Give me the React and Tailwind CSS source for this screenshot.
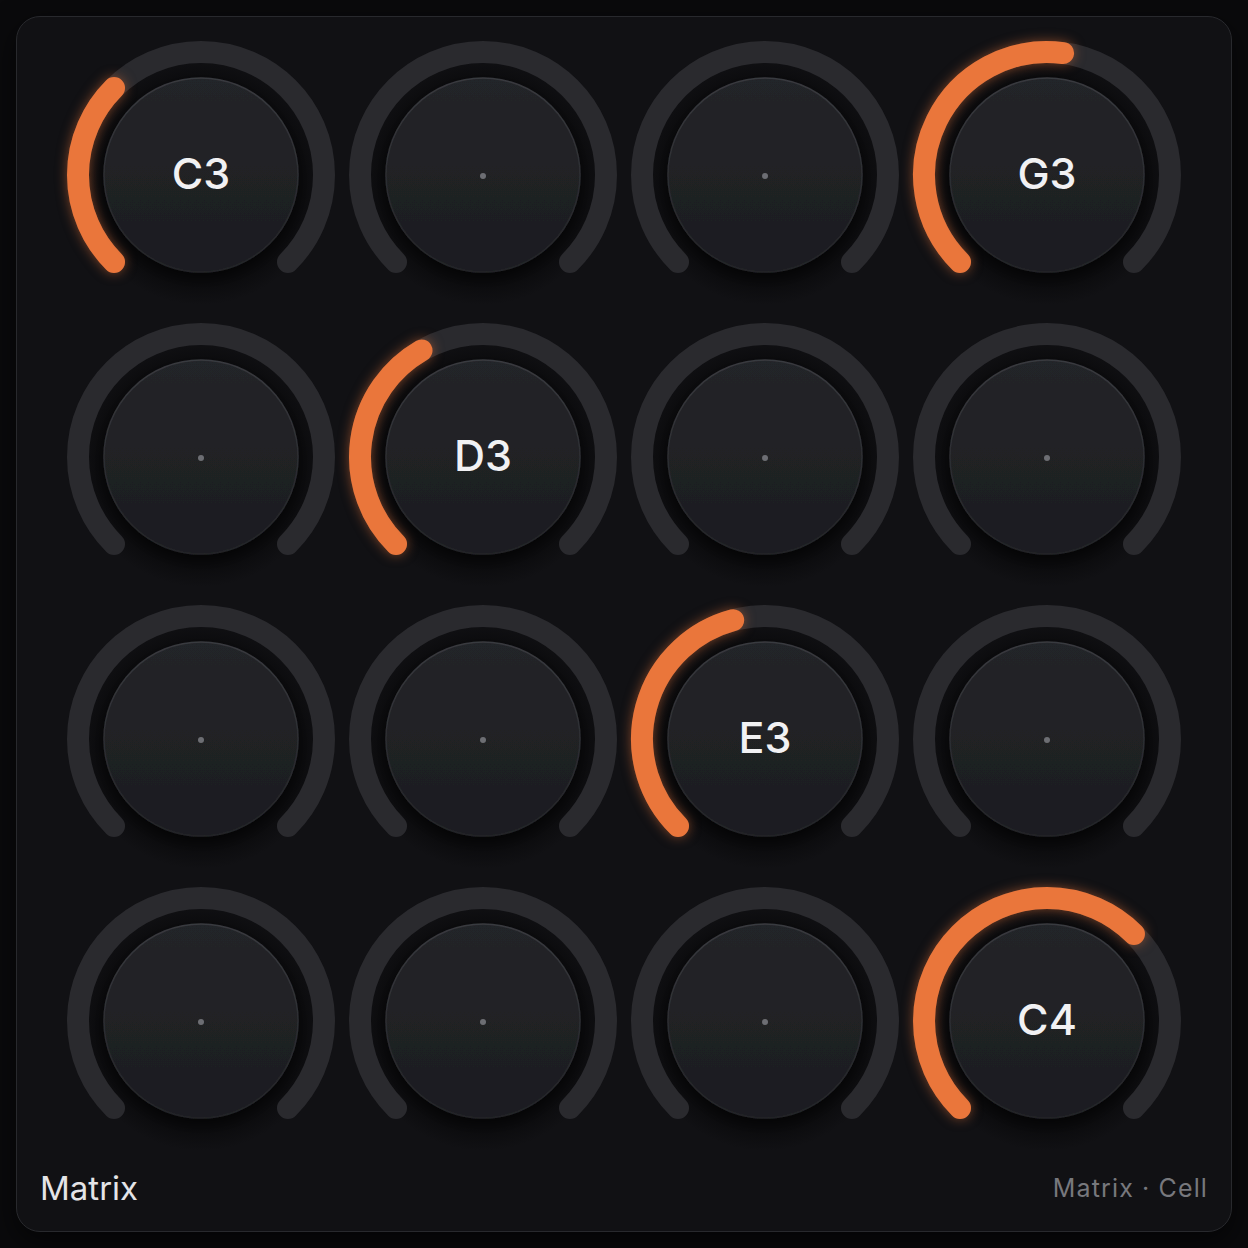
import React from "react";

const CELLS = [
  "C3", null, null, "G3",
  null, "D3", null, null,
  null, null, "E3", null,
  null, null, null, "C4",
];

// range is C2..C5, 36 semitones over a 270 degree sweep
const STEPS = { C: 0, D: 2, E: 4, F: 5, G: 7, A: 9, B: 11 };
const noteValue = (n) => (STEPS[n[0]] + (parseInt(n.slice(1), 10) - 2) * 12) / 36;

const SIZE = 268;
const C = SIZE / 2;

function polar(r, deg) {
  const a = (deg * Math.PI) / 180;
  return [C + r * Math.sin(a), C - r * Math.cos(a)];
}

function arc(r, from, to) {
  const [x1, y1] = polar(r, from);
  const [x2, y2] = polar(r, to);
  const large = to - from > 180 ? 1 : 0;
  return `M ${x1} ${y1} A ${r} ${r} 0 ${large} 1 ${x2} ${y2}`;
}

function Knob({ note, idx }) {
  const end = note ? -135 + noteValue(note) * 270 : -135;
  return (
    <div className="relative w-[268px] h-[268px]">
      <svg width={SIZE} height={SIZE} viewBox={`0 0 ${SIZE} ${SIZE}`} className="overflow-visible">
        <defs>
          <radialGradient id={`well${idx}`} cx="50%" cy="50%" r="50%">
            <stop offset="82%" stopColor="#0b0b0d" />
            <stop offset="100%" stopColor="#0b0b0d" stopOpacity="0" />
          </radialGradient>
          <linearGradient id={`face${idx}`} x1="0" y1="0" x2="0" y2="1">
            <stop offset="0%" stopColor="#242529" />
            <stop offset="100%" stopColor="#1c1d20" />
          </linearGradient>
          <linearGradient id={`rim${idx}`} x1="0" y1="0" x2="0" y2="1">
            <stop offset="0%" stopColor="#393a3f" />
            <stop offset="55%" stopColor="#2c2d31" />
            <stop offset="100%" stopColor="#232428" />
          </linearGradient>
          <filter id={`sh${idx}`} x="-30%" y="-30%" width="160%" height="160%">
            <feDropShadow dx="0" dy="6" stdDeviation="6" floodColor="#000" floodOpacity="0.6" />
          </filter>
        </defs>

        <circle cx={C} cy={C + 6} r={124} fill={`url(#well${idx})`} />
        <path d={arc(123, -135, 135)} fill="none" stroke="#2a2a2e" strokeWidth="22" strokeLinecap="round" />
        {note && (
          <path
            d={arc(123, -135, end)}
            fill="none"
            stroke="#ea763b"
            strokeWidth="22"
            strokeLinecap="round"
            className="drop-shadow-[0_0_6px_rgba(234,118,59,0.5)]"
          />
        )}
        <circle cx={C} cy={C} r={97} fill={`url(#face${idx})`} stroke={`url(#rim${idx})`} strokeWidth="1.5" filter={`url(#sh${idx})`} />
        {!note && <circle cx={C} cy={C + 1} r={3} fill="#6d6e73" />}
      </svg>
      {note && (
        <div className="absolute inset-0 flex items-center justify-center">
          <span className="font-['Inter',sans-serif] text-[43px] font-medium text-[#f1f1f3] leading-none -mt-[3px]">
            {note}
          </span>
        </div>
      )}
    </div>
  );
}

export default function App() {
  return (
    <div className="min-h-screen w-full bg-[#0a0a0c] p-4 font-['Inter',sans-serif]">
      <div className="w-[1216px] h-[1216px] rounded-[24px] border border-[#28292d] bg-[#111114] shadow-[0_10px_30px_rgba(0,0,0,0.6)] flex flex-col pt-[24px] pb-[24px]">
        <div className="grid grid-cols-[repeat(4,268px)] gap-x-[14px] gap-y-[14px] justify-center">
          {CELLS.map((n, i) => (
            <Knob key={i} note={n} idx={i} />
          ))}
        </div>
        <div className="mt-[16px] h-[36px] px-[23px] flex items-center justify-between">
          <span className="text-[33px] text-[#e4e4e7]">Matrix</span>
          <span className="text-[25px] tracking-[0.045em] text-[#77787d]">Matrix · Cell</span>
        </div>
      </div>
    </div>
  );
}
